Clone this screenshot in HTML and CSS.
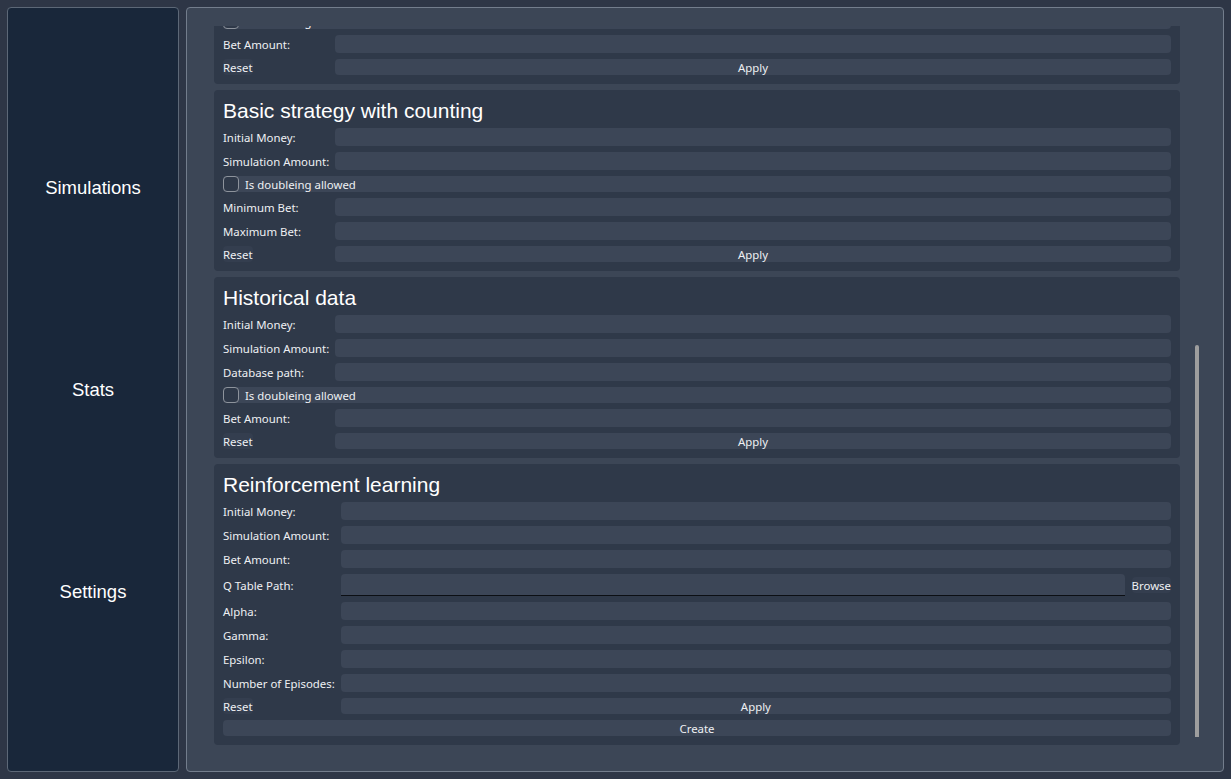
FILE: index.html
```html
<!DOCTYPE html>
<html>
<head>
<meta charset="utf-8">
<link rel="stylesheet" href="styles.css">
</head>
<body>
<nav class="sidebar">
  <div class="nav-item">Simulations</div>
  <div class="nav-item">Stats</div>
  <div class="nav-item">Settings</div>
</nav>
<main class="main">
  <div class="viewport">
    <div class="content">
      <section class="card">
        <h2 class="card-title">Basic strategy</h2>
        <div class="form">
          <label class="lbl">Initial Money:</label><div class="field"></div>
          <label class="lbl">Simulation Amount:</label><div class="field"></div>
          <div class="check-row"><span class="box"></span><span>Is doubleing allowed</span></div>
          <label class="lbl">Bet Amount:</label><div class="field"></div>
          <div class="btn-sm">Reset</div><div class="btn-wide">Apply</div>
        </div>
      </section>
      <section class="card">
        <h2 class="card-title">Basic strategy with counting</h2>
        <div class="form">
          <label class="lbl">Initial Money:</label><div class="field"></div>
          <label class="lbl">Simulation Amount:</label><div class="field"></div>
          <div class="check-row"><span class="box"></span><span>Is doubleing allowed</span></div>
          <label class="lbl">Minimum Bet:</label><div class="field"></div>
          <label class="lbl">Maximum Bet:</label><div class="field"></div>
          <div class="btn-sm">Reset</div><div class="btn-wide">Apply</div>
        </div>
      </section>
      <section class="card">
        <h2 class="card-title">Historical data</h2>
        <div class="form">
          <label class="lbl">Initial Money:</label><div class="field"></div>
          <label class="lbl">Simulation Amount:</label><div class="field"></div>
          <label class="lbl">Database path:</label><div class="field"></div>
          <div class="check-row"><span class="box"></span><span>Is doubleing allowed</span></div>
          <label class="lbl">Bet Amount:</label><div class="field"></div>
          <div class="btn-sm">Reset</div><div class="btn-wide">Apply</div>
        </div>
      </section>
      <section class="card">
        <h2 class="card-title">Reinforcement learning</h2>
        <div class="form">
          <label class="lbl">Initial Money:</label><div class="field"></div>
          <label class="lbl">Simulation Amount:</label><div class="field"></div>
          <label class="lbl">Bet Amount:</label><div class="field"></div>
          <label class="lbl tall">Q Table Path:</label>
          <div class="path-row"><div class="field path"></div><div class="btn-sm">Browse</div></div>
          <label class="lbl">Alpha:</label><div class="field"></div>
          <label class="lbl">Gamma:</label><div class="field"></div>
          <label class="lbl">Epsilon:</label><div class="field"></div>
          <label class="lbl">Number of Episodes:</label><div class="field"></div>
          <div class="btn-sm">Reset</div><div class="btn-wide">Apply</div>
          <div class="btn-wide full">Create</div>
        </div>
      </section>
    </div>
    <div class="scrollbar"><div class="handle"></div></div>
  </div>
</main>
</body>
</html>
```
FILE: styles.css
```css
* { box-sizing: border-box; }
html, body { margin: 0; }
body {
  width: 1231px;
  height: 779px;
  padding: 7px;
  background: #2e3646;
  display: flex;
  gap: 7px;
  font-family: "Noto Sans", "Open Sans", sans-serif;
  font-size: 11.4px;
  color: #eef0f3;
  overflow: hidden;
}
.sidebar {
  width: 172px;
  background: #19273a;
  border: 1px solid #5d6877;
  border-radius: 4px;
  display: flex;
  flex-direction: column;
  justify-content: center;
}
.nav-item {
  height: 202px;
  display: flex;
  align-items: center;
  justify-content: center;
  padding-top: 1px;
  font-family: "Liberation Sans", Arial, sans-serif;
  font-size: 18.5px;
  color: #ffffff;
}
.main {
  flex: 1;
  background: #3c4656;
  border: 1px solid #737d8c;
  border-radius: 4px;
  padding: 18px 18px 17px 18px;
  display: flex;
}
.viewport {
  flex: 1;
  display: flex;
  min-height: 0;
}
.content {
  flex: 1;
  overflow: hidden;
  display: flex;
  flex-direction: column;
  justify-content: flex-end;
  gap: 6px;
  padding: 9px;
}
.card {
  flex-shrink: 0;
  background: #2f3949;
  border-radius: 4px;
  padding: 9px;
}
.card-title {
  margin: 0 0 6px 0;
  font-family: "Liberation Sans", Arial, sans-serif;
  font-weight: normal;
  font-size: 21px;
  line-height: 23px;
  color: #ffffff;
}
.form {
  display: grid;
  grid-template-columns: max-content 1fr;
  column-gap: 6px;
  row-gap: 6px;
}
.lbl {
  height: 18px;
  display: flex;
  align-items: center;
  white-space: nowrap;
}
.lbl.tall { height: 22px; }
.field {
  height: 18px;
  background: #3c4657;
  border-radius: 4px;
}
.path-row {
  display: flex;
  gap: 7px;
  align-items: center;
}
.field.path {
  flex: 1;
  height: 22px;
  border-bottom: 1px solid #0c0f14;
  border-radius: 4px 4px 0 0;
}
.check-row {
  grid-column: 1 / 3;
  height: 16px;
  background: #3c4657;
  border-radius: 4px;
  display: flex;
  align-items: center;
  gap: 6px;
}
.box {
  width: 16px;
  height: 16px;
  border: 1px solid #8d939c;
  border-radius: 4px;
  background: #2f3949;
}
.btn-sm {
  justify-self: start;
  height: 16px;
  display: flex;
  align-items: center;
  background: #343e4f;
  border-radius: 4px;
  white-space: nowrap;
}
.btn-wide {
  height: 16px;
  display: flex;
  align-items: center;
  justify-content: center;
  background: #3c4657;
  border-radius: 4px;
}
.btn-wide.full { grid-column: 1 / 3; }
.scrollbar {
  width: 16px;
  display: flex;
  flex-direction: column;
  justify-content: flex-end;
  padding-bottom: 17px;
}
.handle {
  width: 4px;
  height: 392px;
  margin-left: 6px;
  background: #9e9e9e;
  border-radius: 2px 2px 0 0;
}
```
